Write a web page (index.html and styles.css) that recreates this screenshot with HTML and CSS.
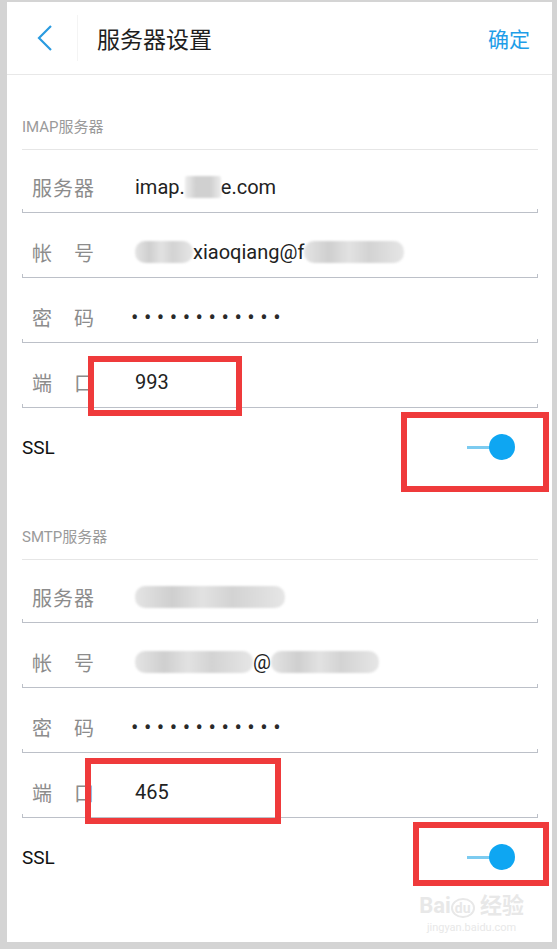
FILE: index.html
```html
<!DOCTYPE html>
<html lang="zh-CN">
<head>
    <meta charset="UTF-8">
    <meta name="viewport" content="width=device-width, initial-scale=1.0">
    <title>服务器设置</title>
    <link rel="stylesheet" href="styles.css">
</head>
<body>
    <div class="screen">
        <div class="topbar">
            <div class="back">
                <svg width="20" height="28" viewBox="0 0 20 28">
                    <polyline points="15,2 3,14 15,26" fill="none" stroke="#2a9be0" stroke-width="2.2"/>
                </svg>
            </div>
            <div class="title">服务器设置</div>
            <div class="confirm">确定</div>
        </div>

        <div class="section-title">IMAP服务器</div>
        <div class="row first">
            <div class="field">
                <span class="label">服务器</span>
                <span class="value">imap.<span class="mask light" style="width: 36px"></span>e.com</span>
            </div>
            <div class="underline"></div>
        </div>
        <div class="row">
            <div class="field">
                <span class="label">帐号</span>
                <span class="value"><span class="mask" style="width: 58px"></span>xiaoqiang@f<span class="mask" style="width: 100px"></span></span>
            </div>
            <div class="underline"></div>
        </div>
        <div class="row">
            <div class="field">
                <span class="label">密码</span>
                <span class="value dots">••••••••••••</span>
            </div>
            <div class="underline"></div>
        </div>
        <div class="row">
            <div class="field">
                <span class="label">端口</span>
                <span class="value">993</span>
            </div>
            <div class="underline"></div>
            <div class="mark mark-port1"></div>
        </div>
        <div class="ssl-row">
            <span class="ssl">SSL</span>
            <div class="toggle"><span class="track"></span><span class="thumb"></span></div>
            <div class="mark mark-ssl1"></div>
        </div>

        <div class="section-title second">SMTP服务器</div>
        <div class="row first">
            <div class="field">
                <span class="label">服务器</span>
                <span class="value"><span class="mask" style="width: 150px"></span></span>
            </div>
            <div class="underline"></div>
        </div>
        <div class="row">
            <div class="field">
                <span class="label">帐号</span>
                <span class="value"><span class="mask" style="width: 118px"></span>@<span class="mask" style="width: 108px"></span></span>
            </div>
            <div class="underline"></div>
        </div>
        <div class="row">
            <div class="field">
                <span class="label">密码</span>
                <span class="value dots">••••••••••••</span>
            </div>
            <div class="underline"></div>
        </div>
        <div class="row">
            <div class="field">
                <span class="label">端口</span>
                <span class="value">465</span>
            </div>
            <div class="underline"></div>
            <div class="mark mark-port2"></div>
        </div>
        <div class="ssl-row">
            <span class="ssl">SSL</span>
            <div class="toggle"><span class="track"></span><span class="thumb"></span></div>
            <div class="mark mark-ssl2"></div>
        </div>

        <div class="watermark">
            <div class="wm-logo">Bai<span class="paw">du</span> 经验</div>
            <div class="wm-url">jingyan.baidu.com</div>
        </div>
    </div>
</body>
</html>
```

FILE: styles.css
```css
body {
    margin: 0;
    padding: 2px 5px 7px 7px;
    background-color: #d4d4d4;
    font-family: Roboto, "Noto Sans CJK SC", sans-serif;
}
.screen {
    position: relative;
    background-color: #ffffff;
    height: 940px;
    overflow: hidden;
}
.topbar {
    display: flex;
    align-items: center;
    height: 72px;
    border-bottom: 1px solid #e8e8e8;
}
.back {
    width: 71px;
    height: 46px;
    display: flex;
    align-items: center;
    padding-left: 29px;
    box-sizing: border-box;
    border-right: 1px solid #f4f4f4;
}
.back svg {
    display: block;
}
.title {
    margin-left: 19px;
    font-size: 23px;
    color: #1e1e1e;
    flex: 1;
}
.confirm {
    font-size: 21px;
    color: #1f9ee8;
    margin-right: 22px;
}
.section-title {
    margin: 0 14px 0 15px;
    height: 75px;
    box-sizing: border-box;
    padding-top: 42px;
    line-height: 20px;
    font-size: 15px;
    color: #9a9a9a;
    border-bottom: 1px solid #e6e6e6;
}
.row {
    position: relative;
    margin: 0 14px 0 15px;
    height: 65px;
    display: flex;
    flex-direction: column;
    justify-content: flex-end;
}
.row.first {
    height: 63px;
}
.field {
    display: flex;
    align-items: center;
    height: 26px;
    margin-bottom: 9px;
}
.label {
    width: 62px;
    margin-left: 10px;
    font-size: 20px;
    color: #8c8c8c;
    text-align: justify;
    text-align-last: justify;
}
.value {
    margin-left: 41px;
    font-size: 20px;
    color: #222222;
    display: flex;
    align-items: center;
}
.dots {
    margin-left: 37px;
    letter-spacing: 5.5px;
    font-size: 22px;
    color: #2a2a2a;
}
.mask {
    display: inline-block;
    height: 22px;
    border-radius: 10px;
    background: linear-gradient(90deg, #e4e4e4, #cfcfcf 25%, #e2e2e2 45%, #d3d3d3 65%, #e6e6e6);
    filter: blur(1.2px);
}
.mask.light {
    border-radius: 2px;
    background: linear-gradient(90deg, #eeeeee, #d0d0d0 30%, #d0d0d0 70%, #ececec);
}
.underline {
    height: 3px;
    border: 1px solid #bcc0c8;
    border-top: none;
}
.ssl-row {
    position: relative;
    margin: 0 14px 0 15px;
    height: 77px;
    display: flex;
    align-items: flex-start;
    justify-content: space-between;
    padding-top: 28px;
    box-sizing: border-box;
}
.ssl {
    font-size: 19px;
    color: #111111;
    line-height: 24px;
}
.toggle {
    display: flex;
    align-items: center;
    margin-right: 23px;
    height: 26px;
    margin-top: -2px;
}
.track {
    width: 26px;
    height: 3px;
    background-color: #7ccbf0;
    margin-right: -4px;
}
.thumb {
    width: 26px;
    height: 26px;
    border-radius: 50%;
    background-color: #0ea6f2;
}
.mark {
    position: absolute;
    border: 6px solid #ef3a3b;
    box-sizing: border-box;
}
.mark-port1 {
    left: 66px;
    top: 13px;
    width: 154px;
    height: 60px;
}
.mark-ssl1 {
    left: 379px;
    top: 4px;
    width: 148px;
    height: 80px;
}
.mark-port2 {
    left: 63px;
    top: 5px;
    width: 196px;
    height: 66px;
}
.mark-ssl2 {
    left: 391px;
    top: 4px;
    width: 136px;
    height: 64px;
}
.watermark {
    position: absolute;
    right: 28px;
    bottom: 8px;
    color: #e8e8e8;
    text-align: center;
}
.wm-logo {
    font-size: 22px;
    font-weight: bold;
    line-height: 26px;
}
.paw {
    font-size: 14px;
    border: 2px solid #e8e8e8;
    border-radius: 50%;
    padding: 0 2px;
}
.wm-url {
    font-size: 11px;
}
```
